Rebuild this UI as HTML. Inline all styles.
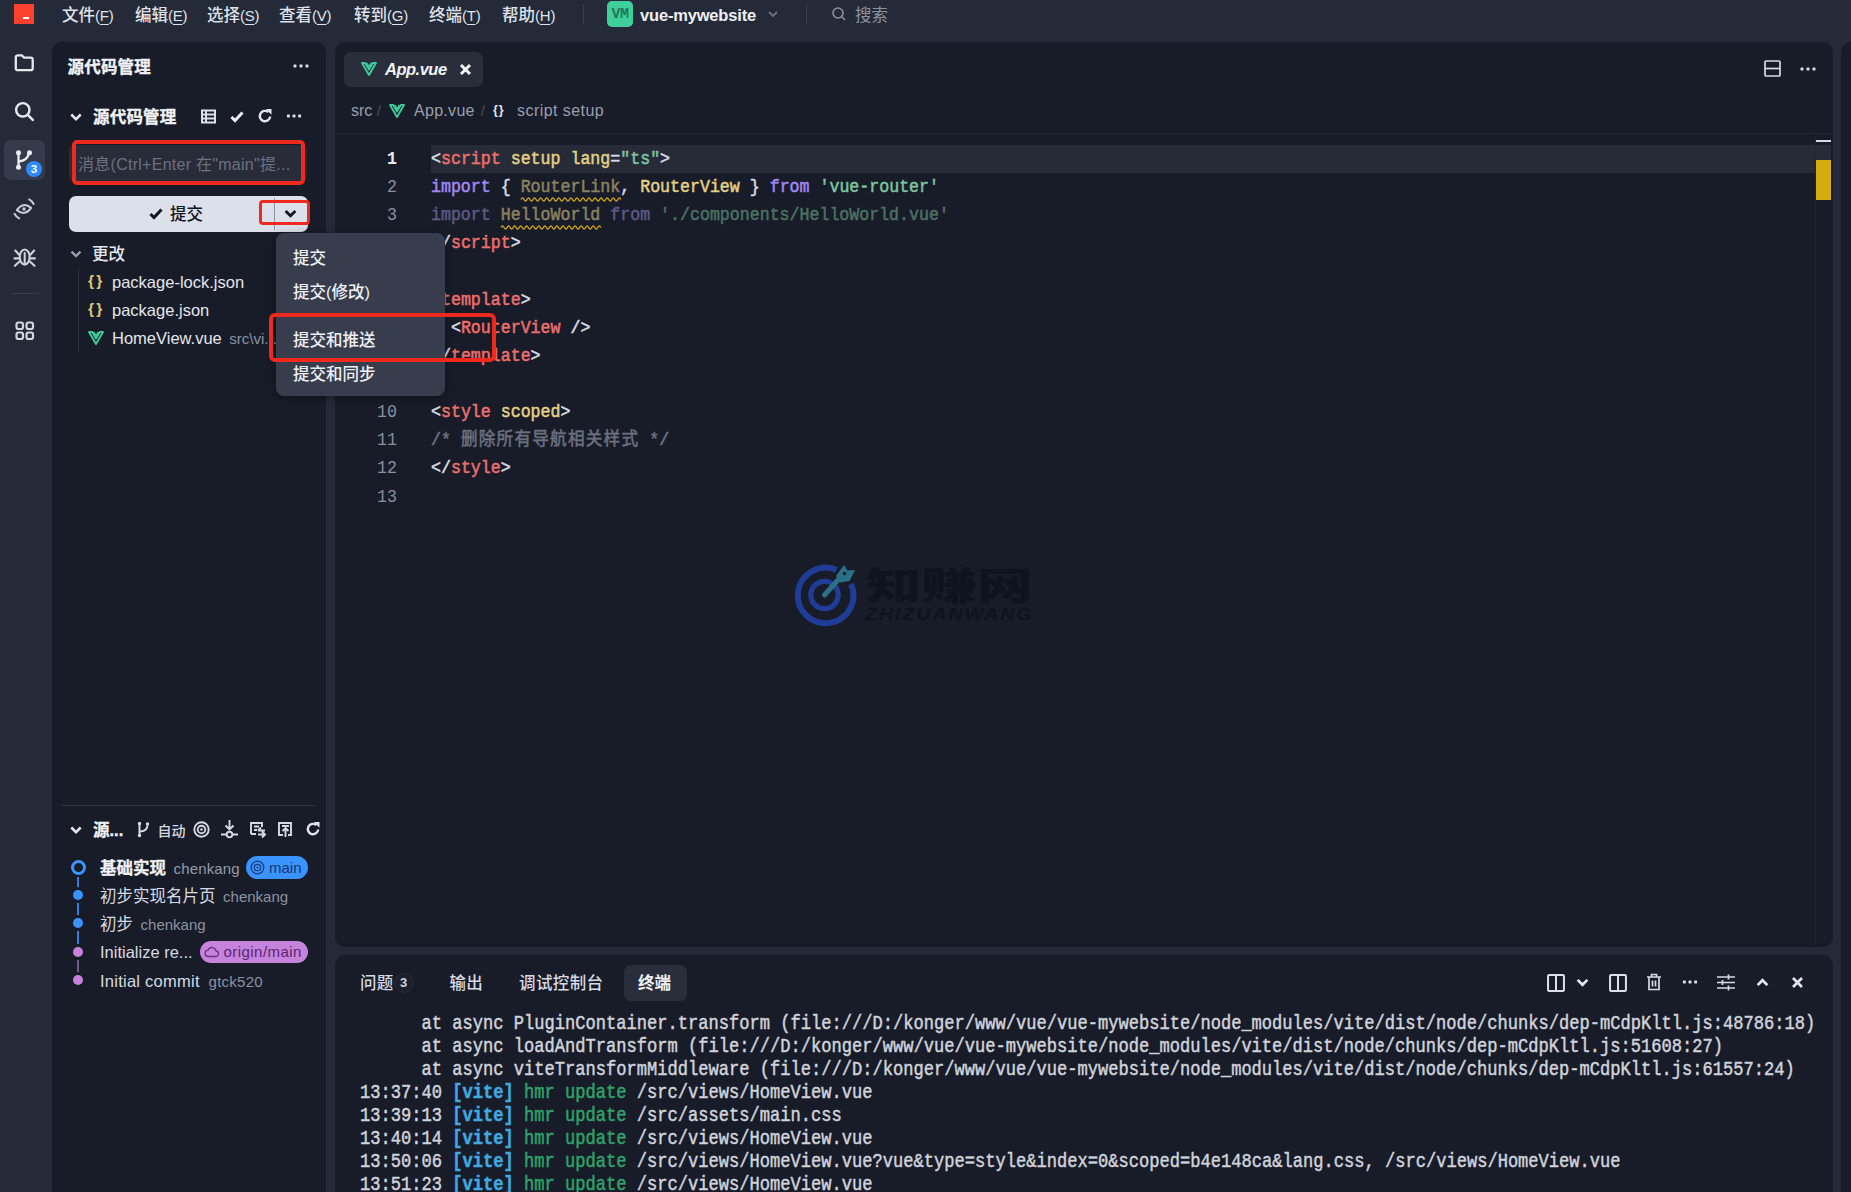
<!DOCTYPE html>
<html lang="zh-CN">
<head>
<meta charset="utf-8">
<title>vue-mywebsite</title>
<style>
*{box-sizing:border-box;margin:0;padding:0}
html,body{width:1851px;height:1192px;overflow:hidden}
body{background:#242a38;font-family:"Liberation Sans","Noto Sans CJK SC",sans-serif;color:#d7dae2;font-size:16px;position:relative}
.abs{position:absolute}
.t{position:absolute;white-space:nowrap;line-height:20px;height:20px}
.panel{position:absolute;background:#181c28;border-radius:10px}
svg{position:absolute;overflow:visible}
.mono{font-family:"Liberation Mono","Noto Sans CJK SC",monospace}
/* title bar */
.menu{color:#dfe2ea;font-size:16.5px;font-weight:500}.mn{font-size:15px;letter-spacing:-.2px}.mn u{text-decoration-thickness:1px;text-underline-offset:2.500px}
/* editor */
.ln{transform:scaleY(1.08);transform-origin:0 19px;position:absolute;left:345px;width:52px;text-align:right;color:#8a8f9e;font-size:16.6px;line-height:28px;height:28px}
.cl{transform:scaleY(1.08);transform-origin:0 19px;position:absolute;left:431px;font-size:16.6px;line-height:28px;height:28px;white-space:pre;color:#d7dae2;-webkit-text-stroke:.5px currentColor}
.tl{position:absolute;left:360px;transform:scaleY(1.16);transform-origin:0 12px;font-size:17.09px;-webkit-text-stroke:.42px currentColor;line-height:23px;height:23px;white-space:pre;color:#d0d3dc}
.k{color:#a189f3}.r{color:#ec6f6e}.y{color:#e2d086}.g{color:#7dc5a1}.w{color:#d7dae2}.c{color:#6b7080}
.dim .k,.dim.k{color:#5c5984}.dim .y,.dim.y{color:#8a8260}.dim .g,.dim.g{color:#4b7163}
.sq{}
</style>
</head>
<body>

<!-- ===== title bar ===== -->
<div class="abs" style="left:14px;top:4px;width:20px;height:20px;background:#fb4230"></div>
<div class="abs" style="left:23px;top:17px;width:6px;height:2px;background:#fff"></div>
<div class="t menu" style="left:62px;top:5px">文件<span class="mn">(<u>F</u>)</span></div>
<div class="t menu" style="left:135px;top:5px">编辑<span class="mn">(<u>E</u>)</span></div>
<div class="t menu" style="left:207px;top:5px">选择<span class="mn">(<u>S</u>)</span></div>
<div class="t menu" style="left:279px;top:5px">查看<span class="mn">(<u>V</u>)</span></div>
<div class="t menu" style="left:354px;top:5px">转到<span class="mn">(<u>G</u>)</span></div>
<div class="t menu" style="left:429px;top:5px">终端<span class="mn">(<u>T</u>)</span></div>
<div class="t menu" style="left:502px;top:5px">帮助<span class="mn">(<u>H</u>)</span></div>
<div class="abs" style="left:583px;top:4px;width:1px;height:20px;background:#3a3e4b"></div>
<div class="abs mono" style="left:607px;top:1px;width:26px;height:26px;border-radius:5px;background:#3fcf9b;color:#22775a;font-size:15px;line-height:28px;text-align:center;letter-spacing:-.5px;font-weight:bold">VM</div>
<div class="t" style="left:640px;top:4.500px;font-weight:bold;font-size:16.5px;color:#eef0f5;letter-spacing:-.18px">vue-mywebsite</div>
<svg style="left:767px;top:9px" width="12" height="10" viewBox="0 0 12 10"><path d="M2 3l4 4 4-4" fill="none" stroke="#6d7282" stroke-width="1.8"/></svg>
<div class="abs" style="left:806px;top:4px;width:1px;height:20px;background:#3a3e4b"></div>
<svg style="left:831px;top:6px" width="16" height="16" viewBox="0 0 16 16"><circle cx="7" cy="7" r="5" fill="none" stroke="#8d92a1" stroke-width="1.6"/><path d="M10.8 10.8l3.2 3.2" stroke="#8d92a1" stroke-width="1.6"/></svg>
<div class="t" style="left:855px;top:5px;color:#8d92a1;font-size:16.5px">搜索</div>

<!-- ===== activity bar ===== -->
<div id="activity">
<!-- folder -->
<svg style="left:14px;top:53px" width="21" height="20" viewBox="0 0 21 20"><path d="M1.800 4.300a2 2 0 0 1 2-2h4l2.300 2.400h6.600a2 2 0 0 1 2 2v8.500a2 2 0 0 1-2 2h-12.900a2 2 0 0 1-2-2z" fill="none" stroke="#e6e8ee" stroke-width="2.300" stroke-linejoin="round"/></svg>
<!-- search -->
<svg style="left:13px;top:100px" width="22" height="22" viewBox="0 0 22 22"><circle cx="9.800" cy="9.800" r="6.700" fill="none" stroke="#e6e8ee" stroke-width="2.400"/><path d="M14.800 14.800l5 5" stroke="#e6e8ee" stroke-width="2.600" stroke-linecap="round"/></svg>
<!-- git active -->
<div class="abs" style="left:4px;top:140px;width:41px;height:40px;border-radius:7px;background:#363b4b"></div>
<svg style="left:14px;top:149px" width="22" height="22" viewBox="0 0 22 22"><g fill="none" stroke="#eceef3" stroke-width="2.300"><path d="M4.500 4v14"/><path d="M4.500 12.500c5.500-.5 9.500-3 10.500-8.500"/></g><circle cx="4.500" cy="3.800" r="2.500" fill="#eceef3"/><circle cx="4.500" cy="18.200" r="2.500" fill="#eceef3"/><circle cx="15.500" cy="3.800" r="2.500" fill="#eceef3"/></svg>
<div class="abs" style="left:26px;top:161px;width:16px;height:16px;border-radius:8px;background:#2e8bff;color:#fff;font-size:11.500px;line-height:16px;text-align:center;font-weight:bold">3</div>
<!-- eye -->
<svg style="left:12.300px;top:196.800px" width="24" height="24" viewBox="0 0 24 24"><g fill="none" stroke="#c9ccd6" stroke-width="2" stroke-linecap="round"><path d="M4.800 12Q12 4.300 19.200 12Q12 19.700 4.800 12Z" transform="rotate(-9 12 12)" stroke-linejoin="round"/><path d="M17.200 2.400A11 11 0 0 1 21.600 7"/><path d="M2.500 16.800A11 11 0 0 0 7.200 21.400"/></g><circle cx="12" cy="12" r="1.700" fill="#c9ccd6"/></svg>
<!-- bug -->
<svg style="left:13px;top:246px" width="24" height="22" viewBox="0 0 24 22"><g fill="none" stroke="#cfd2db" stroke-width="2.100" stroke-linecap="round"><ellipse cx="11.700" cy="11" rx="4.900" ry="7.500"/><path d="M11.700 7v11.500"/><path d="M2.300 4.500l3.800 4.200M21.100 4.500l-3.800 4.200M1.500 12.400h4.800M21.900 12.400h-4.800M1.900 19.800l4.300-4M21.500 19.800l-4.300-4"/></g></svg>
<div class="abs" style="left:11px;top:293px;width:28px;height:1px;background:#3a3e4b"></div>
<!-- grid -->
<svg style="left:15px;top:321px" width="20" height="20" viewBox="0 0 20 20"><g fill="none" stroke="#d3d6de" stroke-width="2.200"><rect x="1.500" y="1.500" width="6.500" height="6.500" rx="2"/><rect x="11.500" y="1.500" width="6.500" height="6.500" rx="2"/><rect x="1.500" y="11.500" width="6.500" height="6.500" rx="2"/><rect x="11.500" y="11.500" width="6.500" height="6.500" rx="2"/></g></svg>
</div>

<!-- ===== side panel ===== -->
<div class="panel" style="left:52px;top:42px;width:274px;height:1160px"></div>
<div id="side">
<div class="t" style="left:67.500px;top:57px;font-weight:bold;font-size:16.5px;color:#f1f2f6;-webkit-text-stroke:.35px #f1f2f6;letter-spacing:.2px">源代码管理</div>
<svg style="left:291px;top:63.3px" width="20" height="6" viewBox="0 0 20 6"><g fill="#dcdfe6"><rect x="2.55" y="1.55" width="2.9" height="2.9" rx=".6"/><rect x="8.55" y="1.55" width="2.9" height="2.9" rx=".6"/><rect x="14.55" y="1.55" width="2.9" height="2.9" rx=".6"/></g></svg>
<svg style="left:70px;top:112px" width="12" height="10" viewBox="0 0 12 10"><path d="M1.300 2.500l4.700 4.700 4.700-4.700" fill="none" stroke="#e4e6ec" stroke-width="2.500"/></svg>
<div class="t" style="left:93px;top:106.500px;font-weight:bold;font-size:16.5px;color:#f1f2f6;-webkit-text-stroke:.35px #f1f2f6;letter-spacing:.2px">源代码管理</div>
<!-- list icon -->
<svg style="left:201px;top:109px" width="15" height="15" viewBox="0 0 15 15"><g fill="none" stroke="#dcdfe6" stroke-width="2"><rect x="1" y="1.500" width="13" height="12"/><path d="M1 5.500h13M1 9.500h13M5 1.500v12"/></g></svg>
<!-- check -->
<svg style="left:230px;top:110px" width="14" height="13" viewBox="0 0 14 13"><path d="M1.500 7l3.500 3.500 7.500-8" fill="none" stroke="#eceef3" stroke-width="3"/></svg>
<!-- refresh -->
<svg style="left:257px;top:108px" width="16" height="16" viewBox="0 0 16 16"><path d="M13.200 8.500a5.200 5.200 0 1 1-1.800-4.400" fill="none" stroke="#e4e6ec" stroke-width="2.400"/><path d="M8.800 1h5.700v5.700z" fill="#e4e6ec"/></svg>
<svg style="left:283.5px;top:113.2px" width="20" height="6" viewBox="0 0 20 6"><g fill="#dcdfe6"><rect x="2.95" y="1.55" width="2.9" height="2.9" rx=".6"/><rect x="8.55" y="1.55" width="2.9" height="2.9" rx=".6"/><rect x="14.15" y="1.55" width="2.9" height="2.9" rx=".6"/></g></svg>
<!-- input -->
<div class="abs" style="left:69px;top:145px;width:238px;height:36px;border-radius:5px;background:#282c39"></div>
<div class="abs" style="left:72px;top:140px;width:233px;height:45px;border:4px solid #ee2a1e;border-radius:5px"></div>
<div class="t" style="left:78px;top:155px;font-size:16px;color:#6c7182;letter-spacing:.27px">消息(Ctrl+Enter 在"main"提...</div>
<!-- commit button -->
<div class="abs" style="left:69px;top:196px;width:239px;height:36px;border-radius:7px;background:#dce0ea"></div>
<svg style="left:149px;top:207px" width="14" height="13" viewBox="0 0 14 13"><path d="M1.500 7l3.500 3.500 7.500-8" fill="none" stroke="#12151e" stroke-width="3"/></svg>
<div class="t" style="left:170px;top:204px;font-size:16.500px;color:#12151e;font-weight:500">提交</div>
<div class="abs" style="left:274px;top:198px;width:1px;height:32px;background:#8f94a3"></div>
<svg style="left:283.500px;top:208px" width="13" height="11" viewBox="0 0 12 10"><path d="M1.500 2.600l4.500 4.500 4.500-4.500" fill="none" stroke="#12151e" stroke-width="2.600"/></svg>
<div class="abs" style="left:259px;top:200px;width:51px;height:25px;border:3.500px solid #ee2a1e;border-radius:4px"></div>
<!-- changes -->
<svg style="left:70px;top:249px" width="12" height="10" viewBox="0 0 12 10"><path d="M1.500 2.600l4.500 4.500 4.500-4.500" fill="none" stroke="#9a9fae" stroke-width="2.300"/></svg>
<div class="t" style="left:92px;top:244px;font-size:16.500px;color:#e4e6ec;font-weight:500">更改</div>
<div class="abs" style="left:78px;top:268px;width:1px;height:84px;background:#2c303c"></div>
<div class="t" style="left:88px;top:272px;color:#dcc676;font-size:15.500px;font-weight:bold;letter-spacing:2.200px;transform:translateY(-.5px);line-height:18px;height:18px">{}</div>
<div class="t" style="left:112px;top:272px;font-size:16.500px;color:#e4e6ec;letter-spacing:0">package-lock.json</div>
<div class="t" style="left:88px;top:300px;color:#dcc676;font-size:15.500px;font-weight:bold;letter-spacing:2.200px;transform:translateY(-.5px);line-height:18px;height:18px">{}</div>
<div class="t" style="left:112px;top:300px;font-size:16.500px;color:#e4e6ec;letter-spacing:0">package.json</div>
<svg style="left:88px;top:330px" width="16" height="16" viewBox="0 0 16 16"><path d="M1 2h3.200l3.800 6.600 3.800-6.600h3.200l-7 12z" fill="none" stroke="#41c99a" stroke-width="1.900" stroke-linejoin="round"/><path d="M5.600 2l2.400 4.100 2.400-4.100" fill="none" stroke="#41c99a" stroke-width="1.700"/></svg>
<div class="t" style="left:112px;top:328px;font-size:16.500px;color:#e4e6ec;letter-spacing:0">HomeView.vue <span style="font-size:15px;color:#8d92a1;margin-left:3px">src\vi...</span></div>
<!-- separator -->
<div class="abs" style="left:62px;top:805px;width:254px;height:1px;background:#2f3340"></div>
<div id="graph">
<svg style="left:70px;top:825px" width="12" height="10" viewBox="0 0 12 10"><path d="M1.300 2.500l4.700 4.700 4.700-4.700" fill="none" stroke="#e4e6ec" stroke-width="2.500"/></svg>
<div class="t" style="left:93px;top:819.700px;font-weight:bold;font-size:16.500px;color:#f1f2f6;-webkit-text-stroke:.3px #f1f2f6">源...</div>
<svg style="left:136px;top:821px" width="15" height="17" viewBox="0 0 15 17"><g fill="none" stroke="#d7dae2" stroke-width="2"><path d="M3.500 2v13"/><path d="M3.500 10.500c5 0 7.500-2 8-6"/></g><circle cx="3.500" cy="2.500" r="1.700" fill="#d7dae2"/><circle cx="3.500" cy="14.500" r="1.700" fill="#d7dae2"/><circle cx="11.500" cy="3" r="1.700" fill="#d7dae2"/></svg>
<div class="t" style="left:157.500px;top:820.500px;font-size:14px;font-weight:500;color:#d7dae2">自动</div>
<svg style="left:193px;top:821px" width="17" height="17" viewBox="0 0 17 17"><g fill="none" stroke="#d7dae2" stroke-width="1.900"><circle cx="8.500" cy="8.500" r="7.200"/><circle cx="8.500" cy="8.500" r="3.800"/></g><circle cx="8.500" cy="8.500" r="1.300" fill="#d7dae2"/></svg>
<svg style="left:221px;top:820px" width="17" height="19" viewBox="0 0 17 19"><g fill="none" stroke="#d7dae2" stroke-width="1.900"><path d="M8.500 0v9M4.500 5.500l4 4 4-4M0 14.500h5.500M11.500 14.500h5.500"/><circle cx="8.500" cy="14.500" r="2.800"/></g></svg>
<svg style="left:249px;top:821px" width="17" height="17" viewBox="0 0 17 17"><g fill="none" stroke="#d7dae2" stroke-width="1.900"><path d="M2 13v-11h11v4M2 13h5M5 5.500h5M5 9h3"/><path d="M9 13.500h7M13 10.500l3 3-3 3M16 9.500h-7M12 6.500l-3 3"/></g></svg>
<svg style="left:277px;top:821px" width="17" height="17" viewBox="0 0 17 17"><g fill="none" stroke="#d7dae2" stroke-width="1.900"><path d="M6 14h-4v-12h12v12h-3"/><path d="M8.500 16v-9M5.500 10l3-3 3 3M5 5h7"/></g></svg>
<svg style="left:305px;top:821px" width="16" height="16" viewBox="0 0 16 16"><path d="M13.200 8.500a5.200 5.200 0 1 1-1.800-4.400" fill="none" stroke="#e4e6ec" stroke-width="2.400"/><path d="M8.800 1h5.700v5.700z" fill="#e4e6ec"/></svg>
<!-- graph lines -->
<div class="abs" style="left:77px;top:877px;width:2px;height:67px;background:#2f7fe0"></div>
<div class="abs" style="left:77px;top:958px;width:2px;height:20px;background:#75588a"></div>
<div class="abs" style="left:70.500px;top:859.500px;width:15.500px;height:15.500px;border-radius:8px;border:3px solid #3b93ff;background:#181c28"></div>
<div class="abs" style="left:73px;top:890px;width:10px;height:10px;border-radius:5px;background:#3b93ff;box-shadow:0 0 0 3px #181c28"></div>
<div class="abs" style="left:73px;top:918px;width:10px;height:10px;border-radius:5px;background:#3b93ff;box-shadow:0 0 0 3px #181c28"></div>
<div class="abs" style="left:73px;top:947px;width:10px;height:10px;border-radius:5px;background:#c583dc;box-shadow:0 0 0 3px #181c28"></div>
<div class="abs" style="left:73px;top:975px;width:10px;height:10px;border-radius:5px;background:#c583dc;box-shadow:0 0 0 3px #181c28"></div>
<div class="t" style="left:100px;top:858px;font-size:16.500px;color:#f1f2f6;font-weight:bold;-webkit-text-stroke:.3px #f1f2f6">基础实现 <span style="font-weight:normal;font-size:15px;color:#959aa9;margin-left:3px;letter-spacing:.15px;-webkit-text-stroke:0">chenkang</span></div>
<div class="abs" style="left:246px;top:855.500px;width:61.500px;height:23px;border-radius:12px;background:#3b93ff"></div>
<svg style="left:250px;top:860px" width="15" height="15" viewBox="0 0 15 15"><g fill="none" stroke="#1d3f78" stroke-width="1.300"><circle cx="7.500" cy="7.500" r="6.300"/><circle cx="7.500" cy="7.500" r="3.200"/></g><circle cx="7.500" cy="7.500" r="1" fill="#1d3f78"/></svg>
<div class="t" style="left:269px;top:858px;font-size:15px;color:#14386f">main</div>
<div class="t" style="left:100px;top:886px;font-size:16.500px;color:#d7dae2">初步实现名片页 <span style="font-size:15px;color:#8d92a1;margin-left:3px">chenkang</span></div>
<div class="t" style="left:100px;top:914px;font-size:16.500px;color:#d7dae2">初步 <span style="font-size:15px;color:#8d92a1;margin-left:3px">chenkang</span></div>
<div class="t" style="left:100px;top:942px;font-size:16.500px;color:#d7dae2">Initialize re...</div>
<div class="abs" style="left:200px;top:940.500px;width:107.500px;height:22.500px;border-radius:12px;background:#c583dc"></div>
<svg style="left:204px;top:944.500px" width="16" height="13" viewBox="0 0 16 13"><path d="M4.500 11.500a3.200 3.200 0 0 1-.3-6.400 4 4 0 0 1 7.700.8 2.800 2.800 0 0 1-.4 5.600z" fill="none" stroke="#6a2f80" stroke-width="1.300"/></svg>
<div class="t" style="left:223.500px;top:942px;font-size:15px;color:#5b2470;letter-spacing:.45px">origin/main</div>
<div class="t" style="left:100px;top:970.500px;font-size:16.500px;color:#d7dae2;letter-spacing:.25px">Initial commit <span style="font-size:15px;color:#8d92a1;margin-left:4px">gtck520</span></div>
</div>
</div>

<!-- ===== editor panel ===== -->
<div class="panel" style="left:335px;top:42px;width:1498px;height:904.500px"></div>
<div id="editor">
<div class="abs" style="left:344.300px;top:51.500px;width:138.600px;height:35.500px;border-radius:7px;background:#2a2e3b"></div>
<svg style="left:361px;top:60.500px" width="16" height="16" viewBox="0 0 16 16"><path d="M1 2h3.200l3.800 6.600 3.800-6.600h3.200l-7 12z" fill="none" stroke="#41c99a" stroke-width="1.900" stroke-linejoin="round"/><path d="M5.600 2l2.400 4.100 2.400-4.100" fill="none" stroke="#41c99a" stroke-width="1.700"/></svg>
<div class="t" style="left:385px;top:59px;font-weight:bold;font-style:italic;font-size:16.500px;color:#f1f2f6;letter-spacing:-.5px">App.vue</div>
<svg style="left:460px;top:64px" width="11" height="11" viewBox="0 0 11 11"><path d="M1 1l9 9M10 1l-9 9" stroke="#f4f5f8" stroke-width="2.900"/></svg>
<!-- split + more -->
<svg style="left:1764px;top:60px" width="17" height="17" viewBox="0 0 17 17"><g fill="none" stroke="#d7dae2" stroke-width="1.700"><rect x="1" y="1" width="15" height="15" rx="1"/><path d="M1 8.500h15"/></g></svg>
<svg style="left:1798px;top:66px" width="20" height="6" viewBox="0 0 20 6"><g fill="#dcdfe6"><rect x="2.55" y="1.55" width="2.9" height="2.9" rx=".6"/><rect x="8.55" y="1.55" width="2.9" height="2.9" rx=".6"/><rect x="14.55" y="1.55" width="2.9" height="2.9" rx=".6"/></g></svg>
<!-- breadcrumb -->
<div class="t" style="left:351px;top:101px;font-size:16px;color:#9a9fae">src</div>
<div class="t" style="left:377px;top:101px;font-size:14px;color:#4d5262">/</div>
<svg style="left:389px;top:103px" width="16" height="16" viewBox="0 0 16 16"><path d="M1 2h3.200l3.800 6.600 3.800-6.600h3.200l-7 12z" fill="none" stroke="#41c99a" stroke-width="1.900" stroke-linejoin="round"/><path d="M5.600 2l2.400 4.100 2.400-4.100" fill="none" stroke="#41c99a" stroke-width="1.700"/></svg>
<div class="t" style="left:414px;top:101px;font-size:16px;color:#9a9fae;letter-spacing:.3px">App.vue</div>
<div class="t" style="left:481px;top:101px;font-size:14px;color:#4d5262">/</div>
<div class="t" style="left:493px;top:99.500px;font-size:12.500px;font-weight:bold;color:#e4e6ec;letter-spacing:1px">{}</div>
<div class="t" style="left:517px;top:101px;font-size:16px;color:#9a9fae;letter-spacing:.45px">script setup</div>
<div class="abs" style="left:335px;top:133px;width:1498px;height:1px;background:#222632"></div>
<!-- current line -->
<div class="abs" style="left:431px;top:145px;width:1385px;height:28px;background:#272b37"></div>
<!-- scrollbar -->
<div class="abs" style="left:1815px;top:134px;width:1px;height:812px;background:#202531"></div>
<div class="abs" style="left:1816px;top:140px;width:15px;height:2px;background:#d7dae2"></div>
<div class="abs" style="left:1816px;top:145px;width:15px;height:28px;background:#272b37"></div>
<div class="abs" style="left:1816px;top:160px;width:15px;height:40px;background:#d4ac0d"></div>
<div class="ln mono" style="top:146.0px;color:#eceef3;font-weight:bold">1</div><div class="cl mono" style="top:146.0px"><span class="w">&lt;</span><span class="r">script</span> <span class="y">setup</span> <span class="y">lang</span><span class="w">=</span><span class="g">"ts"</span><span class="w">&gt;</span></div>
<div class="ln mono" style="top:174.1px;color:#8a8f9e">2</div><div class="cl mono" style="top:174.1px"><span class="k">import</span> <span class="w">{</span> <span class="y dim sq">RouterLink</span><span class="w">,</span> <span class="y">RouterView</span> <span class="w">}</span> <span class="k">from</span> <span class="g">'vue-router'</span></div>
<div class="ln mono" style="top:202.3px;color:#8a8f9e">3</div><div class="cl mono" style="top:202.3px"><span class="dim"><span class="k">import</span> <span class="y sq">HelloWorld</span> <span class="k">from</span> <span class="g">'./components/HelloWorld.vue'</span></span></div>
<div class="ln mono" style="top:230.4px;color:#8a8f9e">4</div><div class="cl mono" style="top:230.4px"><span class="w">&lt;/</span><span class="r">script</span><span class="w">&gt;</span></div>
<div class="ln mono" style="top:258.5px;color:#8a8f9e">5</div><div class="cl mono" style="top:258.5px"></div>
<div class="ln mono" style="top:286.6px;color:#8a8f9e">6</div><div class="cl mono" style="top:286.6px"><span class="w">&lt;</span><span class="r">template</span><span class="w">&gt;</span></div>
<div class="ln mono" style="top:314.8px;color:#8a8f9e">7</div><div class="cl mono" style="top:314.8px">  <span class="w">&lt;</span><span class="r">RouterView</span> <span class="w">/&gt;</span></div>
<div class="ln mono" style="top:342.9px;color:#8a8f9e">8</div><div class="cl mono" style="top:342.9px"><span class="w">&lt;/</span><span class="r">template</span><span class="w">&gt;</span></div>
<div class="ln mono" style="top:371.0px;color:#8a8f9e">9</div><div class="cl mono" style="top:371.0px"></div>
<div class="ln mono" style="top:399.2px;color:#8a8f9e">10</div><div class="cl mono" style="top:399.2px"><span class="w">&lt;</span><span class="r">style</span> <span class="y">scoped</span><span class="w">&gt;</span></div>
<div class="ln mono" style="top:427.3px;color:#8a8f9e">11</div><div class="cl mono" style="top:427.3px"><span class="c" style="font-weight:normal">/* <span style="letter-spacing:1.250px">删除所有导航相关样式</span> */</span></div>
<div class="ln mono" style="top:455.4px;color:#8a8f9e">12</div><div class="cl mono" style="top:455.4px"><span class="w">&lt;/</span><span class="r">style</span><span class="w">&gt;</span></div>
<div class="ln mono" style="top:483.6px;color:#8a8f9e">13</div><div class="cl mono" style="top:483.6px"></div>

<svg style="left:520.6px;top:197.9px" width="100" height="4.0" viewBox="0 0 100 4.0"><path d="M0 1.5Q1.51 -1.50 3.02 1.5Q4.54 4.50 6.05 1.5Q7.56 -1.50 9.07 1.5Q10.58 4.50 12.10 1.5Q13.61 -1.50 15.12 1.5Q16.63 4.50 18.15 1.5Q19.66 -1.50 21.17 1.5Q22.68 4.50 24.19 1.5Q25.71 -1.50 27.22 1.5Q28.73 4.50 30.24 1.5Q31.75 -1.50 33.27 1.5Q34.78 4.50 36.29 1.5Q37.80 -1.50 39.32 1.5Q40.83 4.50 42.34 1.5Q43.85 -1.50 45.36 1.5Q46.88 4.50 48.39 1.5Q49.90 -1.50 51.41 1.5Q52.92 4.50 54.44 1.5Q55.95 -1.50 57.46 1.5Q58.97 4.50 60.48 1.5Q62.00 -1.50 63.51 1.5Q65.02 4.50 66.53 1.5Q68.05 -1.50 69.56 1.5Q71.07 4.50 72.58 1.5Q74.09 -1.50 75.61 1.5Q77.12 4.50 78.63 1.5Q80.14 -1.50 81.65 1.5Q83.17 4.50 84.68 1.5Q86.19 -1.50 87.70 1.5Q89.22 4.50 90.73 1.5Q92.24 -1.50 93.75 1.5Q95.26 4.50 96.78 1.5Q98.29 -1.50 99.80 1.5" fill="none" stroke="#cda41a" stroke-width="1.300"/></svg>
<svg style="left:500.8px;top:226.0px" width="100" height="4.0" viewBox="0 0 100 4.0"><path d="M0 1.5Q1.51 -1.50 3.02 1.5Q4.54 4.50 6.05 1.5Q7.56 -1.50 9.07 1.5Q10.58 4.50 12.10 1.5Q13.61 -1.50 15.12 1.5Q16.63 4.50 18.15 1.5Q19.66 -1.50 21.17 1.5Q22.68 4.50 24.19 1.5Q25.71 -1.50 27.22 1.5Q28.73 4.50 30.24 1.5Q31.75 -1.50 33.27 1.5Q34.78 4.50 36.29 1.5Q37.80 -1.50 39.32 1.5Q40.83 4.50 42.34 1.5Q43.85 -1.50 45.36 1.5Q46.88 4.50 48.39 1.5Q49.90 -1.50 51.41 1.5Q52.92 4.50 54.44 1.5Q55.95 -1.50 57.46 1.5Q58.97 4.50 60.48 1.5Q62.00 -1.50 63.51 1.5Q65.02 4.50 66.53 1.5Q68.05 -1.50 69.56 1.5Q71.07 4.50 72.58 1.5Q74.09 -1.50 75.61 1.5Q77.12 4.50 78.63 1.5Q80.14 -1.50 81.65 1.5Q83.17 4.50 84.68 1.5Q86.19 -1.50 87.70 1.5Q89.22 4.50 90.73 1.5Q92.24 -1.50 93.75 1.5Q95.26 4.50 96.78 1.5Q98.29 -1.50 99.80 1.5" fill="none" stroke="#cda41a" stroke-width="1.300"/></svg>
<div id="wm">
<svg style="left:792.300px;top:558.700px" width="70" height="70" viewBox="0 0 70 70"><g fill="none"><path d="M44.500 10.800a27.800 27.800 0 1 0 14.500 14.200" stroke="#1f3d96" stroke-width="6"/><circle cx="32.500" cy="36" r="13.700" stroke="#1f3d96" stroke-width="5.300"/><path d="M32.500 36l17-19" stroke="#2c7088" stroke-width="5" stroke-linecap="round"/><path d="M44 17l8-11 3.500 5.500 7.500-.5-5.500 11-9.500 1.500z" fill="#2c7088"/><circle cx="52.500" cy="14.500" r="1.800" fill="#181c28"/></g></svg>
<div class="t" style="left:865.500px;top:561.500px;font-size:37.500px;line-height:48px;height:48px;font-weight:900;color:#0f131d;transform:scaleX(1.48);transform-origin:0 0">知赚网</div>
<div class="t" style="left:865px;top:604.700px;font-size:16px;line-height:20px;font-weight:bold;font-style:italic;color:#0f131d;letter-spacing:1.500px;transform:scaleX(1.235);transform-origin:0 0">ZHIZUANWANG</div>
</div>
</div>
</div>

<!-- ===== bottom panel ===== -->
<div class="panel" style="left:335px;top:955px;width:1498px;height:250px"></div>
<div id="bottom">
<div class="t" style="left:360px;top:973px;font-size:16.500px;color:#d7dae2;font-weight:500;letter-spacing:.2px">问题</div>
<div class="abs" style="left:394.500px;top:974px;width:18px;height:18px;border-radius:9px;background:#1c202c;box-shadow:0 0 0 1px #262a37;color:#d0d3dc;font-size:13px;font-weight:bold;line-height:18px;text-align:center">3</div>
<div class="t" style="left:449.500px;top:973px;font-size:16.500px;color:#d7dae2;font-weight:500;letter-spacing:.3px">输出</div>
<div class="t" style="left:519px;top:973px;font-size:16.500px;color:#d7dae2;font-weight:500;letter-spacing:.4px">调试控制台</div>
<div class="abs" style="left:624px;top:964.500px;width:62.500px;height:36px;border-radius:7px;background:#2a2e3b"></div>
<div class="t" style="left:638px;top:973px;font-size:16.500px;color:#f1f2f6;font-weight:bold">终端</div>
<!-- right icons -->
<svg style="left:1546.500px;top:973.500px" width="18" height="18" viewBox="0 0 17 17"><g fill="none" stroke="#dcdfe6" stroke-width="1.900"><rect x="1" y="1" width="15" height="15" rx="1"/><path d="M8.500 1v15"/></g></svg>
<svg style="left:1575.500px;top:976.500px" width="13" height="11" viewBox="0 0 12 10"><path d="M1.500 2.600l4.500 4.500 4.500-4.500" fill="none" stroke="#e4e6ec" stroke-width="2.500"/></svg>
<svg style="left:1608.500px;top:973.500px" width="18" height="18" viewBox="0 0 17 17"><g fill="none" stroke="#dcdfe6" stroke-width="1.900"><rect x="1" y="1" width="15" height="15" rx="1"/><path d="M8.500 1v15"/></g></svg>
<svg style="left:1646px;top:973px" width="16" height="18" viewBox="0 0 16 18"><g fill="none" stroke="#d7dae2" stroke-width="1.700"><path d="M1 4h14M5.500 4v-2.500h5v2.500M3 4v12.500h10v-12.500M6.500 7.500v6M9.500 7.500v6"/></g></svg>
<svg style="left:1680px;top:979px" width="20" height="6" viewBox="0 0 20 6"><g fill="#dcdfe6"><rect x="2.95" y="1.55" width="2.9" height="2.9" rx=".6"/><rect x="8.55" y="1.55" width="2.9" height="2.9" rx=".6"/><rect x="14.15" y="1.55" width="2.9" height="2.9" rx=".6"/></g></svg>
<svg style="left:1717px;top:974px" width="18" height="17" viewBox="0 0 18 17"><g fill="none" stroke="#d7dae2" stroke-width="1.700"><path d="M0 3h18M0 8.500h18M0 14h18M11.500 .5v5M5.500 6v5M11.500 11.500v5"/></g></svg>
<svg style="left:1755.500px;top:977px" width="13" height="11" viewBox="0 0 12 10"><path d="M1.500 7.400l4.500-4.500 4.500 4.500" fill="none" stroke="#e4e6ec" stroke-width="2.500"/></svg>
<svg style="left:1791.500px;top:976.500px" width="11" height="11" viewBox="0 0 11 11"><path d="M1 1l9 9M10 1l-9 9" stroke="#e4e6ec" stroke-width="2.700"/></svg>
<div class="tl mono" style="top:1011.5px">      at async PluginContainer.transform (file:///D:/konger/www/vue/vue-mywebsite/node_modules/vite/dist/node/chunks/dep-mCdpKltl.js:48786:18)</div>
<div class="tl mono" style="top:1034.5px">      at async loadAndTransform (file:///D:/konger/www/vue/vue-mywebsite/node_modules/vite/dist/node/chunks/dep-mCdpKltl.js:51608:27)</div>
<div class="tl mono" style="top:1057.5px">      at async viteTransformMiddleware (file:///D:/konger/www/vue/vue-mywebsite/node_modules/vite/dist/node/chunks/dep-mCdpKltl.js:61557:24)</div>
<div class="tl mono" style="top:1080.5px">13:37:40 <b style="color:#3fa9e0">[vite]</b> <span style="color:#2fa36b">hmr update</span> /src/views/HomeView.vue</div>
<div class="tl mono" style="top:1103.5px">13:39:13 <b style="color:#3fa9e0">[vite]</b> <span style="color:#2fa36b">hmr update</span> /src/assets/main.css</div>
<div class="tl mono" style="top:1126.5px">13:40:14 <b style="color:#3fa9e0">[vite]</b> <span style="color:#2fa36b">hmr update</span> /src/views/HomeView.vue</div>
<div class="tl mono" style="top:1149.5px">13:50:06 <b style="color:#3fa9e0">[vite]</b> <span style="color:#2fa36b">hmr update</span> /src/views/HomeView.vue?vue&amp;type=style&amp;index=0&amp;scoped=b4e148ca&amp;lang.css, /src/views/HomeView.vue</div>
<div class="tl mono" style="top:1172.5px">13:51:23 <b style="color:#3fa9e0">[vite]</b> <span style="color:#2fa36b">hmr update</span> /src/views/HomeView.vue</div>

</div>

<!-- right sliver -->
<div class="panel" style="left:1841px;top:42px;width:30px;height:1160px"></div>

<!-- ===== popup ===== -->
<div id="popup">
<div class="abs" style="left:275.500px;top:232.500px;width:169px;height:163px;border-radius:8px;background:#383d4d;box-shadow:0 2px 10px rgba(0,0,0,.35)"></div>
<div class="t" style="left:293px;top:248px;font-size:16.500px;color:#eef0f5;font-weight:500">提交</div>
<div class="t" style="left:293px;top:282px;font-size:16.500px;color:#eef0f5;font-weight:500">提交(修改)</div>
<div class="t" style="left:293px;top:330px;font-size:16.500px;color:#eef0f5;font-weight:500">提交和推送</div>
<div class="t" style="left:293px;top:364px;font-size:16.500px;color:#eef0f5;font-weight:500">提交和同步</div>
<div class="abs" style="left:268.500px;top:312.500px;width:227.500px;height:49.500px;border:4px solid #ee2a1e;border-radius:6px"></div>
</div>

</body>
</html>
